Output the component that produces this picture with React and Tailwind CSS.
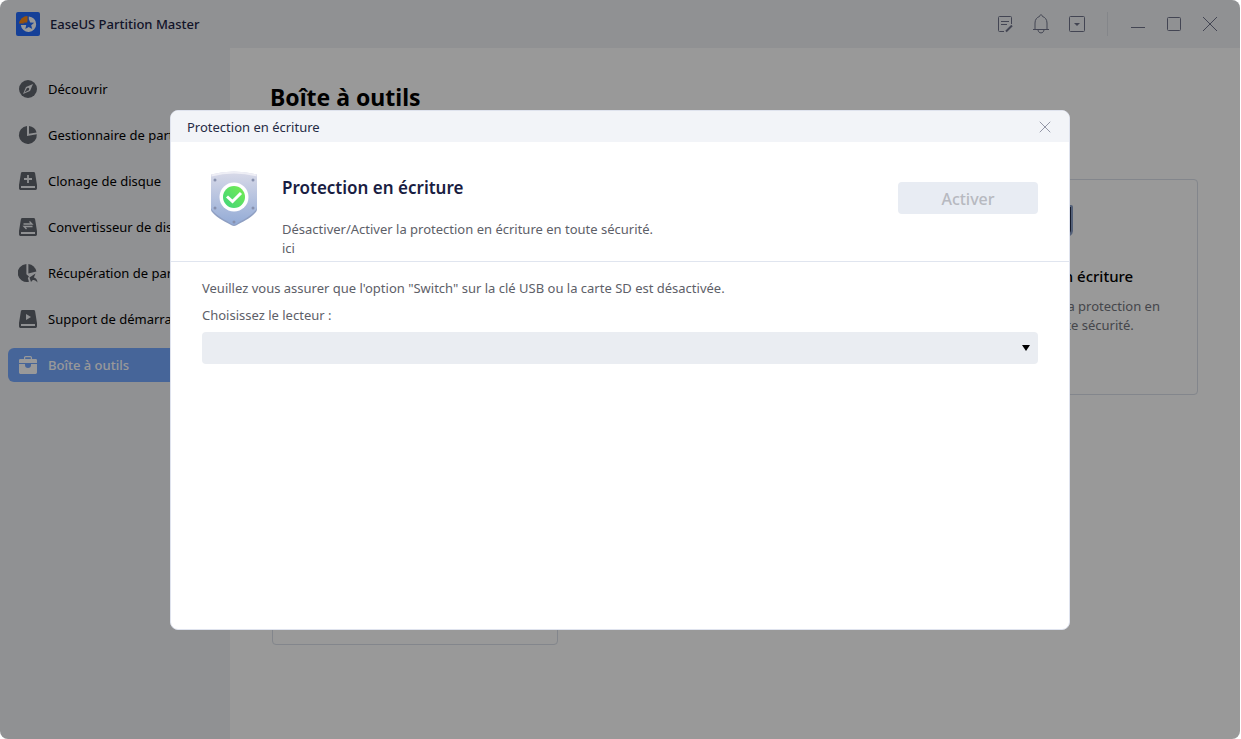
import React, { useState } from 'react';

const CompassIcon = () => <svg className="w-5 h-5 shrink-0" viewBox="0 0 20 20">
    <circle cx="10" cy="10" r="9" fill="#62666f" />
    <path d="M15 5l-3 7-7 3 3-7z" fill="#f0f2f5" />
    <path d="M6.500 13.500L9 9l2 2z" fill="#62666f" />
    <circle cx="10" cy="10" r="1.200" fill="#62666f" />
  </svg>;

const PieIcon = () => <svg className="w-5 h-5 shrink-0" viewBox="0 0 20 20">
    <path d="M9 1v10l9.800-1.800A9 9 0 1 1 9 1z" fill="#62666f" />
    <path d="M11 1a9 9 0 0 1 7.600 6.400L11 8.800z" fill="#62666f" />
  </svg>;

const PieRestoreIcon = () => <svg className="w-5 h-5 shrink-0" viewBox="0 0 20 20">
    <path d="M8.400 1v10.200l2.600 2.300-1.200 1.400 1.200 3.800A9 9 0 1 1 8.400 1z" fill="#62666f" />
    <path d="M10.400 1a9 9 0 0 1 8 7.600l-8 2z" fill="#62666f" />
    <path d="M17.500 10.500L11.500 14.500l1.500 4.500 1.500-1.800c1.800-.6 3.500.3 5 2.300-.2-3-1.700-4.800-3.600-5z" fill="#62666f" />
  </svg>;

const DiskIcon = ({
  children
}) => <svg className="w-5 h-5 shrink-0" viewBox="0 0 20 20">
    <path d="M4.400 1h11.200a1.500 1.500 0 0 1 1.500 1.300L19 14v3.600a1.400 1.400 0 0 1-1.400 1.400H2.400A1.400 1.400 0 0 1 1 17.600V14L2.900 2.300A1.500 1.500 0 0 1 4.400 1z" fill="#62666f" />
    <path d="M3 15h14v2H3z" fill="#f0f2f5" />
    {children}
  </svg>;

const ToolboxIcon = () => <svg className="w-5 h-5 shrink-0" viewBox="0 0 20 20">
    <path d="M6.600 5V2.600a1 1 0 0 1 1-1h4.800a1 1 0 0 1 1 1V5" fill="none" stroke="#fff" strokeWidth="1.200" />
    <path d="M2.200 4h15.600A1.200 1.200 0 0 1 19 5.200V8H1V5.200A1.200 1.200 0 0 1 2.200 4z" fill="#fff" />
    <path d="M1 9h6v1a3 3 0 0 0 6 0V9h6v8.600a1.400 1.400 0 0 1-1.400 1.400H2.400A1.400 1.400 0 0 1 1 17.600z" fill="#fff" />
  </svg>;

const LogoIcon = () => <svg className="w-6 h-6" viewBox="0 0 24 24">
    <rect width="24" height="24" rx="2" fill="#246bfd" />
    <path d="M12.800 4.500a7.700 7.700 0 1 1-8 8.500h8z" fill="#fff" />
    <path d="M11.500 4v7.500H3A8.500 8.500 0 0 1 11.500 4z" fill="#ff8a14" />
    <path d="M12.700 6.700l1.500 3.700 4 .3-3 2.500 1 3.900-3.500-2.100-3.400 2.100.9-3.900-3-2.500 4-.3z" fill="#246bfd" />
  </svg>;

const ShieldIcon = () => <svg className="w-16 h-16 shrink-0" viewBox="0 0 64 64">
    <defs>
      <linearGradient id="shield" x1="0" y1="0" x2="0" y2="1">
        <stop offset="0" stopColor="#d9dae8" />
        <stop offset="1" stopColor="#93abd6" />
      </linearGradient>
      <linearGradient id="check" x1="0" y1="1" x2="1" y2="0">
        <stop offset="0" stopColor="#3fd47c" />
        <stop offset="1" stopColor="#76ec50" />
      </linearGradient>
    </defs>
    <path d="M9 8.500Q32 1.500 55 8.500V41q0 2-1.500 3.500C48 51 40 54 34.500 57.200q-2.500 1.600-5 0C24 54 16 51 10.500 44.500 9 43 9 42 9 41z" fill="#8f9fc2" />
    <path d="M9 6.500Q32 .500 55 6.500V39q0 2-1.500 3.500C48 49 40 52 34.500 56q-2.500 1.600-5 0C24 52 16 49 10.500 42.500 9 41 9 40 9 39z" fill="url(#shield)" />
    <path d="M9.500 8.500Q32 2.500 54.500 8.500V6.500Q32 .500 9.500 6.500z" fill="#eeeef5" />
    <g fill="#8790ad">
      <circle cx="13" cy="12" r="1.500" />
      <circle cx="51" cy="12" r="1.500" />
      <circle cx="13" cy="40" r="1.500" />
      <circle cx="51" cy="40" r="1.500" />
      <circle cx="32" cy="54" r="1.500" />
    </g>
    <circle cx="32" cy="29" r="14.500" fill="#fff" />
    <circle cx="32" cy="29" r="11" fill="url(#check)" />
    <path d="M25 28.500l5.500 5 8.500-8.500" fill="none" stroke="#fff" strokeWidth="3" />
  </svg>;

const CloseIcon = ({
  className
}) => <svg className={className} viewBox="0 0 16 16" fill="none" stroke="currentColor">
    <path d="M1 1l14 14M15 1L1 15" />
  </svg>;

const menuItems = [{
  label: 'Découvrir',
  icon: <CompassIcon />
}, {
  label: 'Gestionnaire de partition',
  icon: <PieIcon />
}, {
  label: 'Clonage de disque',
  icon: <DiskIcon><path d="M10 4v8M6 8h8" stroke="#f0f2f5" strokeWidth="1.800" /></DiskIcon>
}, {
  label: 'Convertisseur de disque',
  icon: <DiskIcon><path d="M5.500 7h8.500l-2.500-2.500M14.500 9.500H6l2.500 2.500" fill="none" stroke="#f0f2f5" strokeWidth="1.300" /></DiskIcon>
}, {
  label: 'Récupération de partition',
  icon: <PieRestoreIcon />
}, {
  label: 'Support de démarrage',
  icon: <DiskIcon><path d="M8 5l5 3-5 3z" fill="#f0f2f5" /></DiskIcon>
}, {
  label: 'Boîte à outils',
  icon: <ToolboxIcon />
}];

const TitleBar = () => {
  return <header className="flex items-center justify-between h-12 pl-4 pr-5 bg-[#f0f2f5]">
      <div className="flex items-center gap-[10px]">
        <LogoIcon />
        <span className="pt-px text-[13px] font-medium text-[#1d2445]">EaseUS Partition Master</span>
      </div>
      <div className="flex items-center text-[#70748a]">
        <button className="w-9 flex justify-center" aria-label="Commentaires">
          <svg className="w-5 h-5" viewBox="0 0 20 20" fill="none" stroke="currentColor">
            <path d="M16.500 10V3.500a1 1 0 0 0-1-1h-11a1 1 0 0 0-1 1v13a1 1 0 0 0 1 1H9M6 7.500h8M6 10.500h6" />
            <path d="M11 17.500l6-6" strokeWidth="2" />
          </svg>
        </button>
        <button className="w-9 flex justify-center" aria-label="Notifications">
          <svg className="w-5 h-5" viewBox="0 0 20 20" fill="none" stroke="currentColor">
            <path d="M4 15V9c0-3.500 2-5.800 4.500-6.500C8.800 1.300 9.300.8 10 .8s1.200.5 1.500 1.700C14 3.200 16 5.500 16 9v6M2 15.500h16M7 16c.3 1.900 1.500 2.900 3 2.900s2.700-1 3-2.900" />
          </svg>
        </button>
        <button className="w-9 flex justify-center" aria-label="Menu">
          <svg className="w-5 h-5" viewBox="0 0 20 20" fill="none" stroke="currentColor">
            <rect x="2.500" y="2.500" width="15" height="15" rx="1" />
            <path d="M7 9h6l-3 3z" fill="currentColor" stroke="none" />
          </svg>
        </button>
        <span className="w-px h-6 ml-3 mr-3 bg-[#dcdfe6]" />
        <button className="w-9 flex justify-center" aria-label="Réduire">
          <svg className="w-4 h-4" viewBox="0 0 16 16" stroke="currentColor"><path d="M1 11.500h14" /></svg>
        </button>
        <button className="w-9 flex justify-center" aria-label="Agrandir">
          <svg className="w-4 h-4" viewBox="0 0 16 16" fill="none" stroke="currentColor"><rect x="1.500" y="1.500" width="13" height="13" rx="1" /></svg>
        </button>
        <button className="w-9 -mr-2 flex justify-center" aria-label="Fermer">
          <CloseIcon className="w-4 h-4" />
        </button>
      </div>
    </header>;
};

const Sidebar = ({
  active
}) => {
  return <nav className="w-[230px] shrink-0 bg-[#f0f2f5] px-2 pt-6 flex flex-col gap-3">
      {menuItems.map(item => <a key={item.label} href="#" className={`flex items-center gap-[10px] h-[34px] pl-[10px] rounded-md text-[13px] leading-5 whitespace-nowrap overflow-hidden ${item.label === active ? 'bg-[#76a8ff] text-white font-medium' : 'text-black'}`}>
          {item.icon}
          <span>{item.label}</span>
        </a>)}
    </nav>;
};

const ToolCard = ({
  children
}) => {
  return <div className="h-[216px] border border-[#dadfe9] rounded-sm px-6 pt-6 text-center">{children}</div>;
};

const Toolbox = () => {
  return <main className="flex-1 bg-white px-[42px] pt-[29px]">
      <h1 className="-ml-[2px] text-[23px] leading-10 font-bold text-black">Boîte à outils</h1>
      <div className="grid grid-cols-3 gap-[34px] mt-[62px]">
        <ToolCard />
        <ToolCard />
        <ToolCard>
          <svg className="w-9 h-9 mx-auto" viewBox="0 0 36 36">
            <path d="M2 1h32q2 0 2 2v24q0 3-3 5H3q-3-2-3-5V3q0-2 2-2z" fill="#8ba0c8" />
            <path d="M3 3h31v23q0 2-2 4H3z" fill="#252d48" />
          </svg>
          <h2 className="mt-6 text-[15px] leading-6 font-medium text-black">Protection en écriture</h2>
          <p className="mt-[9px] text-[13px] leading-[19px] text-[#73757d]">Désactiver/Activer la protection en écriture en toute sécurité.</p>
        </ToolCard>
        <ToolCard />
      </div>
    </main>;
};

const WriteProtectionDialog = ({
  onClose
}) => {
  const [drive, setDrive] = useState('');
  return <div role="dialog" aria-labelledby="dialog-title" className="w-[900px] max-w-full h-[520px] bg-white border border-[#dfe3ee] rounded-lg overflow-hidden">
      <div className="flex items-center justify-between h-[31px] pt-px pl-4 pr-[18px] bg-[#f2f4f8]">
        <h2 id="dialog-title" className="pt-px text-[13px] text-[#252b45]">Protection en écriture</h2>
        <button className="text-[#74788c]" aria-label="Fermer" onClick={onClose}>
          <CloseIcon className="w-3 h-3" />
        </button>
      </div>
      <div className="flex items-start h-[120px] px-[31px] border-b border-[#e0e5ef]">
        <div className="mt-[26px]"><ShieldIcon /></div>
        <div className="flex-1 ml-4 mt-8">
          <h3 className="text-[17px] leading-7 font-semibold text-[#191d42]">Protection en écriture</h3>
          <div className="mt-[18px] text-[13px] leading-[19px] text-[#5d6068]">
            <p>Désactiver/Activer la protection en écriture en toute sécurité.</p>
            <p>ici</p>
          </div>
        </div>
        <button disabled className="mt-10 w-[140px] h-8 pt-px rounded bg-[#e8ecf3] text-[16px] font-medium text-[#b7b9c0]">Activer</button>
      </div>
      <div className="px-[31px] pt-4 text-[13px] text-[#5d6068]">
        <p className="leading-5">Veuillez vous assurer que l'option "Switch" sur la clé USB ou la carte SD est désactivée.</p>
        <label htmlFor="drive" className="block mt-[7px] leading-5">Choisissez le lecteur :</label>
        <div className="relative mt-[7px]">
          <select id="drive" value={drive} onChange={e => setDrive(e.target.value)} className="block w-full h-8 px-3 rounded-sm bg-[#eaedf2] appearance-none">
            <option value=""></option>
          </select>
          <svg className="absolute right-2 top-3 w-2 h-2 pointer-events-none" viewBox="0 0 8 8"><path d="M0 1h8L4 7z" fill="#000" /></svg>
        </div>
      </div>
    </div>;
};

const App = () => {
  const [dialogOpen, setDialogOpen] = useState(true);
  return <div className="min-h-screen bg-white pr-px font-['Noto_Sans','Segoe_UI',sans-serif]">
      <div className="relative min-h-screen flex flex-col rounded-lg overflow-hidden">
        <TitleBar />
        <div className="flex flex-1">
          <Sidebar active="Boîte à outils" />
          <Toolbox />
        </div>
        {dialogOpen && <div className="absolute inset-0 pt-px flex items-center justify-center bg-black/40">
            <WriteProtectionDialog onClose={() => setDialogOpen(false)} />
          </div>}
      </div>
    </div>;
};

export default App;
